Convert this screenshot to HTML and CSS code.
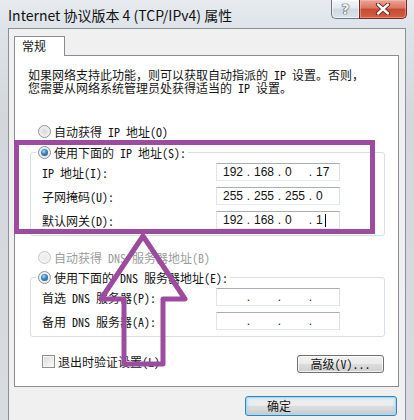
FILE: index.html
```html
<!DOCTYPE html>
<html lang="zh-CN">
<head>
<meta charset="utf-8">
<title>Internet 协议版本 4 (TCP/IPv4) 属性</title>
<link rel="stylesheet" href="styles.css">
</head>
<body>
<div class="window">
  <div class="titlebar">
    <div class="title">Internet 协议版本 4 (TCP/IPv4) 属性</div>
    <div class="caption-btns">
      <div class="cbtn help">?</div>
      <div class="cbtn close">
        <svg width="16" height="12" viewBox="0 0 16 12">
          <path d="M3 1.5 L13 10.5 M13 1.5 L3 10.5" stroke="#5a2119" stroke-width="4.2" stroke-linecap="round"/>
          <path d="M3 1.5 L13 10.5 M13 1.5 L3 10.5" stroke="#ffffff" stroke-width="2.4" stroke-linecap="round"/>
        </svg>
      </div>
    </div>
  </div>
  <div class="client">
    <div class="tabs"><div class="tab">常规</div></div>
    <div class="panel">
      <p class="intro">如果网络支持此功能，则可以获取自动指派的 IP 设置。否则，<br>您需要从网络系统管理员处获得适当的 IP 设置。</p>

      <div class="opt opt-ip-auto"><span class="radio"></span><span>自动获得 IP 地址(O)</span></div>

      <fieldset class="group group-ip">
        <legend><span class="opt"><span class="radio on"><span class="dot"></span></span><span>使用下面的 IP 地址(S):</span></span></legend>
        <div class="row">
          <span class="lbl">IP 地址(I):</span>
          <div class="ipbox"><span class="num">192</span><span class="sep">.</span><span class="num">168</span><span class="sep">.</span><span class="num">0</span><span class="sep">.</span><span class="num">17</span></div>
        </div>
        <div class="row">
          <span class="lbl">子网掩码(U):</span>
          <div class="ipbox"><span class="num">255</span><span class="sep">.</span><span class="num">255</span><span class="sep">.</span><span class="num">255</span><span class="sep">.</span><span class="num">0</span></div>
        </div>
        <div class="row">
          <span class="lbl">默认网关(D):</span>
          <div class="ipbox"><span class="num">192</span><span class="sep">.</span><span class="num">168</span><span class="sep">.</span><span class="num">0</span><span class="sep">.</span><span class="num">1<span class="caret"></span></span></div>
        </div>
      </fieldset>

      <div class="opt opt-dns-auto disabled"><span class="radio off"></span><span>自动获得 DNS 服务器地址(B)</span></div>

      <fieldset class="group group-dns">
        <legend><span class="opt"><span class="radio on"><span class="dot"></span></span><span>使用下面的 DNS 服务器地址(E):</span></span></legend>
        <div class="row">
          <span class="lbl">首选 DNS 服务器(P):</span>
          <div class="ipbox"><span class="num"></span><span class="sep">.</span><span class="num"></span><span class="sep">.</span><span class="num"></span><span class="sep">.</span><span class="num"></span></div>
        </div>
        <div class="row">
          <span class="lbl">备用 DNS 服务器(A):</span>
          <div class="ipbox"><span class="num"></span><span class="sep">.</span><span class="num"></span><span class="sep">.</span><span class="num"></span><span class="sep">.</span><span class="num"></span></div>
        </div>
      </fieldset>

      <div class="bottom-row">
        <div class="check"><span class="box"></span><span>退出时验证设置(L)</span></div>
        <button class="btn adv">高级(V)...</button>
      </div>
    </div>
    <div class="footer">
      <button class="btn ok">确定</button>
    </div>
  </div>

  <svg class="annot" width="414" height="420" viewBox="0 0 414 420">
    <rect x="16.5" y="142.5" width="356" height="89" fill="none" stroke="#9b4c9f" stroke-width="5"/>
    <path d="M143 236 L185 299 L163 299 L163 364 L124 364 L124 299 L101 299 Z" fill="none" stroke="#9b4c9f" stroke-width="5" stroke-linejoin="round"/>
  </svg>
</div>
</body>
</html>
```

FILE: styles.css
```css
* { box-sizing: border-box; }

html, body {
  margin: 0;
  padding: 0;
}

body {
  width: 414px;
  height: 420px;
  overflow: hidden;
  font-family: "Noto Sans Mono CJK SC", "Noto Sans CJK SC", sans-serif;
  font-size: 12px;
  line-height: 13px;
  color: #151515;
}

.window {
  position: relative;
  width: 414px;
  height: 420px;
  background: linear-gradient(to bottom, #e7ebef 0px, #dde3e9 28px, #d3d7dc 120px, #d8dbdf 420px);
}

/* ---------- title bar ---------- */
.titlebar {
  height: 28px;
  display: flex;
  align-items: flex-start;
}

.title {
  padding-left: 8px;
  margin-top: 5px;
  font-family: "Noto Sans CJK SC", sans-serif;
  font-size: 14px;
  line-height: 20px;
  color: #111;
}

.caption-btns {
  margin-left: auto;
  margin-right: 7px;
  display: flex;
}

.cbtn {
  height: 19px;
  display: flex;
  align-items: center;
  justify-content: center;
  border: 1px solid #6a7482;
  border-top: none;
}

.help {
  width: 28px;
  border-right: none;
  border-radius: 0 0 0 5px;
  background: linear-gradient(to bottom, #f4f6f8 0%, #e4e9ee 45%, #cfd7e0 50%, #dbe2e9 100%);
  box-shadow: inset 0 0 0 1px rgba(255,255,255,0.6);
  color: #f3f5f7;
  font-family: "DejaVu Sans", sans-serif;
  font-weight: bold;
  font-size: 14px;
  text-shadow: 0 0 1px #3b4552, 0 0 1px #3b4552, 0 0 1px #3b4552;
}

.close {
  width: 48px;
  border-color: #6e2b22;
  border-radius: 0 0 5px 0;
  background: linear-gradient(to bottom, #eaa597 0%, #db7562 45%, #c74a33 50%, #d25f48 100%);
  box-shadow: inset 0 0 0 1px rgba(255,200,190,0.45);
}

/* ---------- client area ---------- */
.client {
  margin: 0 8px;
  height: 392px;
  background: #f0f0f0;
  border: 1px solid #8b9097;
  border-bottom: none;
  padding: 7px 6px 0 5px;
}

.tabs {
  display: flex;
  height: 19px;
}

.tab {
  position: relative;
  z-index: 1;
  width: 51px;
  height: 20px;
  padding-left: 7px;
  border: 1px solid #898c95;
  border-bottom: none;
  background: #fff;
  line-height: 18px;
}

.panel {
  height: 332px;
  border: 1px solid #898c95;
  background: #fff;
  padding-top: 12px;
}

.intro {
  margin: 0 0 0 13px;
  line-height: 13px;
}

/* ---------- radio options ---------- */
.opt {
  display: flex;
  align-items: center;
  gap: 3px;
  height: 14px;
  white-space: nowrap;
}

.opt-ip-auto {
  margin: 30px 0 0 23px;
}

.opt-dns-auto {
  margin: 14px 0 0 23px;
}

.disabled {
  color: #9c9c9c;
}

.radio {
  width: 13px;
  height: 13px;
  flex: none;
  border-radius: 50%;
  border: 1px solid #8d9194;
  background: radial-gradient(circle at 50% 50%, #d6d6d6 0%, #e9e9e9 45%, #f8f8f8 100%);
  display: flex;
  align-items: center;
  justify-content: center;
}

.radio.off {
  border-color: #c4c6c8;
  background: radial-gradient(circle at 50% 50%, #ececec 0%, #f6f6f6 100%);
}

.radio .dot {
  width: 7px;
  height: 7px;
  border-radius: 50%;
  background: radial-gradient(circle at 40% 35%, #a8dcf8 0%, #3d88c2 40%, #184b75 100%);
}

/* ---------- group boxes ---------- */
.group {
  margin: 7px 0 0 15px;
  width: 355px;
  border: 1px solid #d5dfe5;
  border-radius: 3px;
  padding: 1px 0 3px 0;
  min-inline-size: auto;
}

.group-dns {
  margin-top: 6px;
}

.group legend {
  margin-left: 5px;
  padding: 0 2px;
  height: 14px;
}

.row {
  display: flex;
  align-items: center;
  height: 24px;
  padding-left: 11px;
}

.lbl {
  width: 174px;
  white-space: nowrap;
}

.ipbox {
  width: 124px;
  height: 18px;
  border: 1px solid;
  border-color: #abadb3 #dbdfe6 #e3e9ef #e2e3ea;
  background: #fff;
  display: flex;
  align-items: center;
  padding-left: 3px;
  font-family: "Liberation Sans", sans-serif;
  font-size: 12px;
  line-height: 14px;
  color: #111;
}

.num {
  width: 26px;
  padding-left: 3px;
  display: flex;
  align-items: center;
  height: 14px;
}

.sep {
  width: 5px;
  text-align: center;
}

.caret {
  width: 1px;
  height: 13px;
  margin-left: 2px;
  background: #000;
}

/* ---------- bottom ---------- */
.bottom-row {
  display: flex;
  align-items: flex-start;
  margin-top: 18px;
  height: 18px;
  padding: 0 14px 0 27px;
}

.check {
  display: flex;
  align-items: center;
  gap: 3px;
  height: 13px;
}

.box {
  width: 13px;
  height: 13px;
  border: 1px solid #8e8f8f;
  background: linear-gradient(135deg, #d8d8d8 0%, #ededed 60%, #ffffff 100%);
  box-shadow: inset 0 0 0 1px #f4f4f4;
}

.btn {
  font-family: inherit;
  font-size: 12px;
  line-height: 16px;
  color: #151515;
  padding: 0;
  border: 1px solid #707070;
  border-radius: 3px;
  background: linear-gradient(to bottom, #f2f2f2 0%, #ebebeb 49%, #dddddd 50%, #cfcfcf 100%);
  box-shadow: inset 0 0 0 1px rgba(255,255,255,0.75);
}

.adv {
  margin-left: auto;
  width: 87px;
  height: 18px;
}

.footer {
  display: flex;
  justify-content: flex-end;
  margin-top: 9px;
  padding-right: 2px;
}

.ok {
  width: 152px;
  height: 20px;
  text-align: left;
  padding-left: 21px;
  border-color: #3c7fb1;
  box-shadow: inset 0 0 0 1px #9fdcf8, inset 0 0 3px 2px rgba(120,200,240,0.35);
}

/* ---------- annotation overlay ---------- */
.annot {
  position: absolute;
  left: 0;
  top: 0;
  pointer-events: none;
}
```
